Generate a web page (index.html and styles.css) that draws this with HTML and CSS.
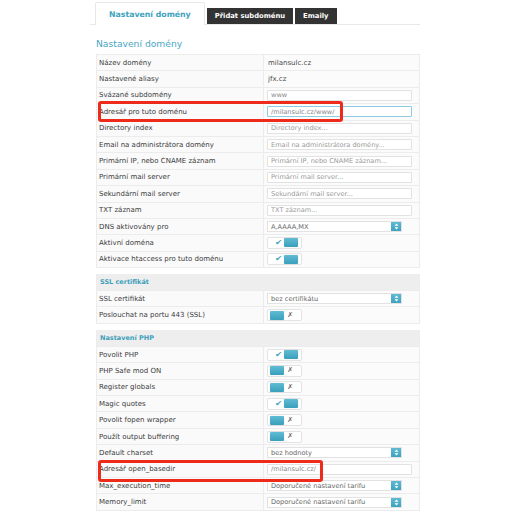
FILE: index.html
```html
<!DOCTYPE html>
<html lang="cs">
<head>
<meta charset="utf-8">
<title>Nastavení domény</title>
<link rel="stylesheet" href="styles.css">
</head>
<body>
<div class="page">
  <div class="tabbar">
    <div class="tab tab-active">Nastavení domény</div>
    <div class="tab tab-dark">Přidat subdoménu</div>
    <div class="tab tab-dark">Emaily</div>
  </div>
  <h1 class="heading">Nastavení domény</h1>

  <div class="section">
    <div class="row"><div class="label">Název domény</div><div class="value"><span class="text">milansulc.cz</span></div></div>
    <div class="row"><div class="label">Nastavené aliasy</div><div class="value"><span class="text">jfx.cz</span></div></div>
    <div class="row"><div class="label">Svázané subdomény</div><div class="value"><input class="field" type="text" value="www"></div></div>
    <div class="row"><div class="label">Adresář pro tuto doménu</div><div class="value"><input class="field field-focus" type="text" value="/milansulc.cz/www/"></div><div class="mark mark-1"></div></div>
    <div class="row"><div class="label">Directory index</div><div class="value"><input class="field" type="text" placeholder="Directory index..."></div></div>
    <div class="row"><div class="label">Email na administrátora domény</div><div class="value"><input class="field" type="text" placeholder="Email na administrátora domény..."></div></div>
    <div class="row"><div class="label">Primární IP, nebo CNAME záznam</div><div class="value"><input class="field" type="text" placeholder="Primární IP, nebo CNAME záznam..."></div></div>
    <div class="row"><div class="label">Primární mail server</div><div class="value"><input class="field" type="text" placeholder="Primární mail server..."></div></div>
    <div class="row"><div class="label">Sekundární mail server</div><div class="value"><input class="field" type="text" placeholder="Sekundární mail server..."></div></div>
    <div class="row"><div class="label">TXT záznam</div><div class="value"><input class="field" type="text" placeholder="TXT záznam..."></div></div>
    <div class="row"><div class="label">DNS aktivovány pro</div><div class="value"><div class="select"><span class="select-text">A,AAAA,MX</span><span class="select-btn"><svg width="5" height="7" viewBox="0 0 5 7"><path d="M2.5 0.5 L4.5 2.7 H0.5 Z M2.5 6.5 L4.5 4.3 H0.5 Z" fill="#fff"/></svg></span></div></div></div>
    <div class="row"><div class="label">Aktivní doména</div><div class="value"><div class="toggle toggle-on"><span class="check">✔</span><span class="knob"></span></div></div></div>
    <div class="row"><div class="label">Aktivace htaccess pro tuto doménu</div><div class="value"><div class="toggle toggle-on"><span class="check">✔</span><span class="knob"></span></div></div></div>
  </div>

  <div class="section">
    <div class="section-head">SSL certifikát</div>
    <div class="row"><div class="label">SSL certifikát</div><div class="value"><div class="select"><span class="select-text">bez certifikátu</span><span class="select-btn"><svg width="5" height="7" viewBox="0 0 5 7"><path d="M2.5 0.5 L4.5 2.7 H0.5 Z M2.5 6.5 L4.5 4.3 H0.5 Z" fill="#fff"/></svg></span></div></div></div>
    <div class="row"><div class="label">Poslouchat na portu 443 (SSL)</div><div class="value"><div class="toggle toggle-off"><span class="knob"></span><span class="cross">✗</span></div></div></div>
  </div>

  <div class="section">
    <div class="section-head">Nastavení PHP</div>
    <div class="row"><div class="label">Povolit PHP</div><div class="value"><div class="toggle toggle-on"><span class="check">✔</span><span class="knob"></span></div></div></div>
    <div class="row"><div class="label">PHP Safe mod ON</div><div class="value"><div class="toggle toggle-off"><span class="knob"></span><span class="cross">✗</span></div></div></div>
    <div class="row"><div class="label">Register globals</div><div class="value"><div class="toggle toggle-off"><span class="knob"></span><span class="cross">✗</span></div></div></div>
    <div class="row"><div class="label">Magic quotes</div><div class="value"><div class="toggle toggle-on"><span class="check">✔</span><span class="knob"></span></div></div></div>
    <div class="row"><div class="label">Povolit fopen wrapper</div><div class="value"><div class="toggle toggle-off"><span class="knob"></span><span class="cross">✗</span></div></div></div>
    <div class="row"><div class="label">Použít output buffering</div><div class="value"><div class="toggle toggle-off"><span class="knob"></span><span class="cross">✗</span></div></div></div>
    <div class="row"><div class="label">Default charset</div><div class="value"><div class="select"><span class="select-text">bez hodnoty</span><span class="select-btn"><svg width="5" height="7" viewBox="0 0 5 7"><path d="M2.5 0.5 L4.5 2.7 H0.5 Z M2.5 6.5 L4.5 4.3 H0.5 Z" fill="#fff"/></svg></span></div></div></div>
    <div class="row"><div class="label">Adresář open_basedir</div><div class="value"><input class="field" type="text" value="/milansulc.cz/"></div><div class="mark mark-2"></div></div>
    <div class="row"><div class="label">Max_execution_time</div><div class="value"><div class="select"><span class="select-text">Doporučené nastavení tarifu</span><span class="select-btn"><svg width="5" height="7" viewBox="0 0 5 7"><path d="M2.5 0.5 L4.5 2.7 H0.5 Z M2.5 6.5 L4.5 4.3 H0.5 Z" fill="#fff"/></svg></span></div></div></div>
    <div class="row"><div class="label">Memory_limit</div><div class="value"><div class="select"><span class="select-text">Doporučené nastavení tarifu</span><span class="select-btn"><svg width="5" height="7" viewBox="0 0 5 7"><path d="M2.5 0.5 L4.5 2.7 H0.5 Z M2.5 6.5 L4.5 4.3 H0.5 Z" fill="#fff"/></svg></span></div></div></div>
  </div>
</div>
</body>
</html>
```

FILE: styles.css
```css
* { box-sizing: border-box; }
html, body {
  margin: 0;
  padding: 0;
  background: #fff;
}
body {
  font-family: "DejaVu Sans", Verdana, sans-serif;
  font-size: 7px;
  color: #3a3a3a;
}
.page {
  width: 324px;
  margin-left: 96px;
}
.tabbar {
  display: flex;
  align-items: flex-end;
  gap: 2px;
  height: 25px;
  margin-left: -6px;
  padding-left: 5px;
  border-bottom: 1px solid #e8e8e8;
}
.tab {
  display: flex;
  align-items: center;
  justify-content: center;
  font-weight: bold;
  white-space: nowrap;
}
.tab-active {
  height: 23px;
  margin-bottom: -1px;
  padding: 0 13px;
  background: #fff;
  border: 1px solid #e8e8e8;
  border-bottom: none;
  border-radius: 2px 2px 0 0;
  color: #3ea2bd;
  font-size: 7.8px;
}
.tab-dark {
  height: 16px;
  padding: 0 8px;
  background: #333;
  color: #fff;
  font-size: 6.8px;
}
.heading {
  margin: 13px 0 4px;
  font-size: 9.2px;
  line-height: 12px;
  font-weight: normal;
  color: #4aa6c2;
}
.section {
  border: 1px solid #ececec;
  border-top: none;
  margin-bottom: 6px;
}
.section-head {
  height: 16px;
  display: flex;
  align-items: center;
  padding-left: 3px;
  background: #eeeeee;
  color: #3f9fba;
  font-weight: bold;
  font-size: 6.5px;
}
.row {
  position: relative;
  display: grid;
  grid-template-columns: 167px 1fr;
  height: 16.4px;
  background: #fafafa;
  border-top: 1px solid #ececec;
}
.label {
  display: flex;
  align-items: center;
  padding-left: 2px;
  border-right: 1px solid #ececec;
  white-space: nowrap;
  color: #3a3a3a;
}
.value {
  display: flex;
  align-items: center;
  padding-left: 3px;
  background: #fbfbfb;
}
.text {
  padding-left: 1px;
  color: #4a4a4a;
}
.field {
  width: 145px;
  height: 11px;
  margin: 0;
  padding: 0 3px;
  border: 1px solid #e2e2e2;
  border-radius: 1px;
  background: #fff;
  font-family: "DejaVu Sans", Verdana, sans-serif;
  font-size: 6.6px;
  color: #888;
  outline: none;
}
.field::placeholder { color: #999; }
.field-focus {
  border-color: #8fcbe0;
}
.select {
  display: flex;
  align-items: center;
  justify-content: space-between;
  width: 135px;
  height: 11px;
  border: 1px solid #e2e2e2;
  background: #fff;
}
.select-text {
  padding-left: 3px;
  color: #666;
  font-size: 6.6px;
  white-space: nowrap;
}
.select-btn {
  display: flex;
  align-items: center;
  justify-content: center;
  width: 10px;
  height: 9px;
  background: linear-gradient(#5cbad3, #3ea3bf);
}
.toggle {
  display: flex;
  align-items: center;
  width: 35px;
  height: 12px;
  border: 1px solid #e3e3e3;
  border-radius: 2px;
  background: #fff;
}
.toggle-on {
  justify-content: space-between;
  padding: 0 3px 0 7px;
}
.toggle-off {
  justify-content: space-between;
  padding: 0 8px 0 2px;
}
.knob {
  width: 14px;
  height: 9px;
  border-radius: 1px;
  background: linear-gradient(#5fbcd4, #3a9fbb);
  box-shadow: 0 0 1px rgba(0,0,0,0.25);
}
.check {
  color: #3a9fbb;
  font-size: 8px;
  line-height: 1;
  transform: skewX(-10deg);
}
.cross {
  color: #666;
  font-size: 7px;
  line-height: 1;
}
.mark {
  position: absolute;
  z-index: 5;
  left: 1px;
  border: 3px solid #ee2a1b;
  border-radius: 3px;
  pointer-events: none;
}
.mark-1 {
  top: -3px;
  width: 245px;
  height: 21px;
}
.mark-2 {
  top: -2px;
  width: 225px;
  height: 22px;
}
```
